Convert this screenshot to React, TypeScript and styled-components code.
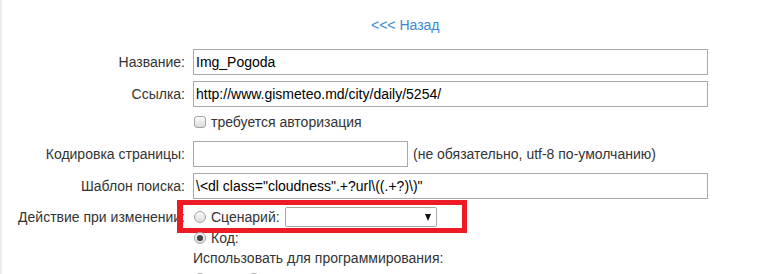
import React from "react";
import styled, { createGlobalStyle } from "styled-components";

const GlobalStyle = createGlobalStyle`
  html, body { margin: 0; padding: 0; background: #fff; }
  body {
    font-family: "Liberation Sans", Arial, sans-serif;
    font-size: 14px;
    color: #333;
    overflow: hidden;
  }
`;

const Page = styled.div`
  border-left: 2px solid #ececec;
  height: 274px;
  box-sizing: border-box;
  overflow: hidden;
`;

const BackRow = styled.div`
  padding: 17px 0 0 369px;
  line-height: 16px;
  height: 16px;
`;

const BackLink = styled.a`
  color: #3a89d3;
  text-decoration: none;
  cursor: pointer;
`;

const Form = styled.div`
  display: flex;
  flex-direction: column;
  padding-top: 16px;
`;

const Row = styled.div<{ $top: number; $h: number }>`
  display: grid;
  grid-template-columns: 183px 1fr;
  column-gap: 8px;
  margin-top: ${(p) => p.$top}px;
  height: ${(p) => p.$h}px;
  align-items: center;
`;

const Label = styled.div`
  text-align: right;
  white-space: nowrap;
  line-height: 16px;
`;

const Cell = styled.div`
  position: relative;
  display: flex;
  align-items: center;
  gap: 5px;
  height: 100%;
  white-space: nowrap;
  line-height: 16px;
`;

const TextInput = styled.div<{ $w: number }>`
  box-sizing: border-box;
  width: ${(p) => p.$w}px;
  height: 26px;
  border: 1px solid #a9a9a9;
  background: #fff;
  color: #000;
  padding: 0 2px;
  display: flex;
  align-items: center;
  font-size: 14px;
  white-space: nowrap;
  overflow: hidden;
`;

const Box = styled.span<{ $round?: boolean }>`
  box-sizing: border-box;
  display: inline-block;
  flex: none;
  width: 12px;
  height: 12px;
  margin-left: 1px;
  border: 1px solid #a4a4a4;
  border-radius: ${(p) => (p.$round ? "50%" : "3px")};
  background: linear-gradient(#fbfbfb, #dcdcdc);
  position: relative;
`;

const Dot = styled.span`
  position: absolute;
  left: 2px;
  top: 2px;
  width: 6px;
  height: 6px;
  border-radius: 50%;
  background: radial-gradient(circle at 50% 40%, #555, #222);
`;

const Select = styled.div`
  box-sizing: border-box;
  width: 152px;
  height: 20px;
  border: 1px solid #a9a9a9;
  border-radius: 2px;
  background: #fff;
  display: flex;
  align-items: center;
  justify-content: flex-end;
  padding-right: 5px;
`;

const Arrow = styled.span`
  width: 0;
  height: 0;
  border-left: 3.5px solid transparent;
  border-right: 3.5px solid transparent;
  border-top: 7px solid #111;
`;

const Highlight = styled.div`
  position: absolute;
  left: -16px;
  top: -7px;
  width: 290px;
  height: 33px;
  box-sizing: border-box;
  border: 5px solid #ed1c24;
  border-left-width: 6px;
  pointer-events: none;
`;

const Gap = styled.span<{ $w: number }>`
  display: inline-block;
  width: ${(p) => p.$w}px;
`;

export default function App() {
  return (
    <>
      <GlobalStyle />
      <Page>
        <BackRow>
          <BackLink>&lt;&lt;&lt; Назад</BackLink>
        </BackRow>
        <Form>
          <Row $top={0} $h={26}>
            <Label>Название:</Label>
            <Cell>
              <TextInput $w={515}>Img_Pogoda</TextInput>
            </Cell>
          </Row>
          <Row $top={6} $h={26}>
            <Label>Ссылка:</Label>
            <Cell>
              <TextInput $w={515}>http://www.gismeteo.md/city/daily/5254/</TextInput>
            </Cell>
          </Row>
          <Row $top={7} $h={16}>
            <Label />
            <Cell>
              <Box />
              требуется авторизация
            </Cell>
          </Row>
          <Row $top={11} $h={26}>
            <Label>Кодировка страницы:</Label>
            <Cell>
              <TextInput $w={215} />
              (не обязательно, utf-8 по-умолчанию)
            </Cell>
          </Row>
          <Row $top={6} $h={26}>
            <Label>Шаблон поиска:</Label>
            <Cell>
              <TextInput $w={515}>\&lt;dl class="cloudness".+?url\((.+?)\)"</TextInput>
            </Cell>
          </Row>
          <Row $top={8} $h={20}>
            <Label>Действие при изменении:</Label>
            <Cell>
              <Box $round />
              Сценарий:
              <Select>
                <Arrow />
              </Select>
              <Highlight />
            </Cell>
          </Row>
          <Row $top={3} $h={16}>
            <Label />
            <Cell>
              <Box $round>
                <Dot />
              </Box>
              Код:
            </Cell>
          </Row>
          <Row $top={4} $h={16}>
            <Label />
            <Cell>Использовать для программирования:</Cell>
          </Row>
          <Row $top={5} $h={16}>
            <Label />
            <Cell>
              <Box $round />
              <Gap $w={31} />
              <Box $round />
            </Cell>
          </Row>
        </Form>
      </Page>
    </>
  );
}
